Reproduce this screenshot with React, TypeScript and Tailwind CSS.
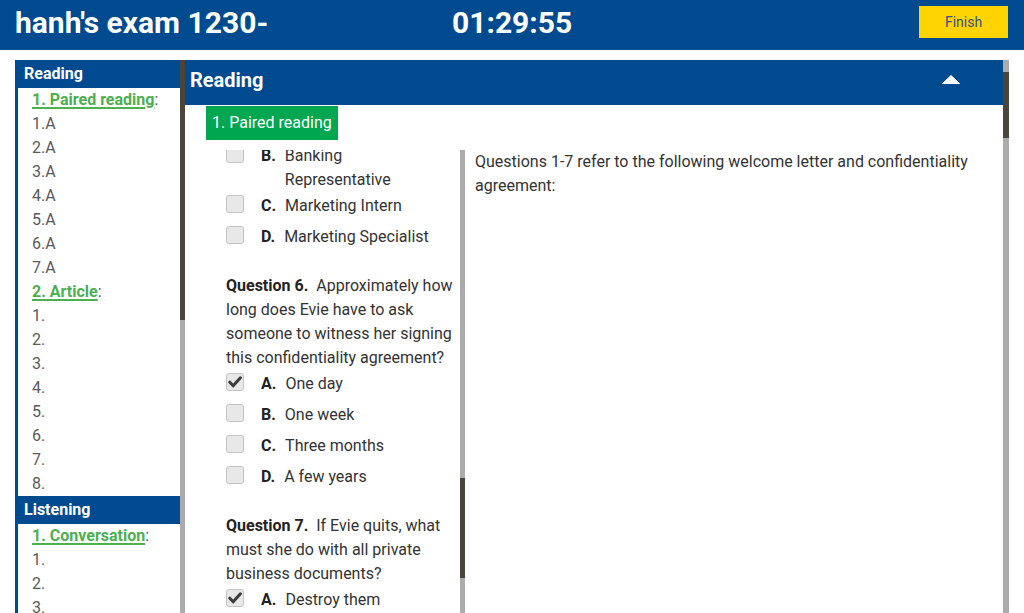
import React from "react";

const BLUE = "bg-[#004a8f]";

function Check({ checked }: { checked?: boolean }) {
  return (
    <div className="w-[18px] h-[18px] mt-[1px] shrink-0 rounded-[3px] border border-[#c4c4c4] bg-[#e8e8e8] flex items-center justify-center">
      {checked && (
        <svg width="14" height="12" viewBox="0 0 14 12">
          <path d="M1.8 6.2 L5.2 9.8 L12.4 1.8" fill="none" stroke="#3d3d3d" strokeWidth="3" strokeLinecap="round" strokeLinejoin="round" />
        </svg>
      )}
    </div>
  );
}

function Option({ letter, text, checked, mb = "mb-[7px]" }: { letter: string; text: string; checked?: boolean; mb?: string }) {
  return (
    <div className={`flex items-start pr-[12px] ${mb}`}>
      <Check checked={checked} />
      <span className="ml-[17px] font-bold text-[#222] shrink-0">{letter}</span>
      <span className="ml-[9px]">{text}</span>
    </div>
  );
}

function SideItem({ t }: { t: string }) {
  return <div className="h-[24px] leading-[24px] pl-[14px] text-[16px] text-[#5a5a5a]">{t}</div>;
}

function SideLink({ t }: { t: string }) {
  return (
    <div className="h-[24px] leading-[24px] pl-[14px] text-[16px]">
      <span className="font-bold text-[#4caf50] underline decoration-[2px] underline-offset-[2px]">{t}</span>
      <span className="text-[#555]">:</span>
    </div>
  );
}

function SideHeader({ t }: { t: string }) {
  return (
    <div className={`h-[28px] ${BLUE} text-white font-bold text-[16px] leading-[28px] -ml-[3px] pl-[9px]`}>{t}</div>
  );
}

export default function App() {
  return (
    <div
      className="w-[1024px] h-[613px] overflow-hidden bg-white text-[#333]"
      style={{ fontFamily: "Roboto, 'Noto Sans', Arial, sans-serif" }}
    >
      <header className={`h-[50px] ${BLUE} flex pl-[15px] pr-[16px]`}>
        <div className="w-[437px] text-white font-bold text-[30px] leading-[46px]">hanh's exam 1230-</div>
        <div className="text-white font-bold text-[30px] leading-[46px]">01:29:55</div>
        <button className="ml-auto mt-[6px] w-[89px] h-[32px] bg-[#ffd400] text-[#3b4f88] text-[14px]">Finish</button>
      </header>

      <div className="flex pt-[10px] h-[563px]">
        <aside className="ml-[15px] flex h-full">
          <div className="w-[165px] border-l-[3px] border-[#004a8f] overflow-hidden">
            <SideHeader t="Reading" />
            <SideLink t="1. Paired reading" />
            {["1.A", "2.A", "3.A", "4.A", "5.A", "6.A", "7.A"].map((t) => (
              <SideItem key={t} t={t} />
            ))}
            <SideLink t="2. Article" />
            {["1.", "2.", "3.", "4.", "5.", "6.", "7.", "8."].map((t) => (
              <SideItem key={"a" + t} t={t} />
            ))}
            <SideHeader t="Listening" />
            <SideLink t="1. Conversation" />
            {["1.", "2.", "3.", "4."].map((t) => (
              <SideItem key={"l" + t} t={t} />
            ))}
          </div>
          <div className="w-[5px] bg-[#ababab] flex flex-col">
            <div className="h-[260px] bg-[#4a443b]" />
          </div>
        </aside>

        <main className="flex h-full">
          <div className="w-[818px] flex flex-col h-full">
            <div className={`h-[45px] ${BLUE} flex items-center justify-between pl-[5px] pr-[43px] pb-[6px]`}>
              <span className="text-white font-bold text-[20px]">Reading</span>
              <svg width="18" height="9" viewBox="0 0 18 9">
                <path d="M9 0.5 L17.5 8.5 L0.5 8.5 Z" fill="white" stroke="white" strokeWidth="1" strokeLinejoin="round" />
              </svg>
            </div>
            <div className="pl-[21px] pt-[1px]">
              <div className="inline-block h-[34px] leading-[34px] px-[6px] bg-[#00a650] text-white text-[16px]">1. Paired reading</div>
            </div>
            <div className="flex mt-[10px] flex-1 min-h-0">
              <div className="w-[275px] overflow-hidden text-[16px] leading-[24px] pl-[41px] pr-[6px]">
                <div className="-mt-[6px]">
                  <Option letter="B." text="Banking Representative" mb="mb-[2px]" />
                  <Option letter="C." text="Marketing Intern" />
                  <Option letter="D." text="Marketing Specialist" mb="mb-[25px]" />
                  <div className="mb-[2px]">
                    <span className="font-bold text-[#222]">Question 6.</span>&nbsp; Approximately how long does Evie have to ask someone to witness her signing this confidentiality agreement?
                  </div>
                  <Option letter="A." text="One day" checked />
                  <Option letter="B." text="One week" />
                  <Option letter="C." text="Three months" />
                  <Option letter="D." text="A few years" mb="mb-[25px]" />
                  <div className="mb-[2px]">
                    <span className="font-bold text-[#222]">Question 7.</span>&nbsp; If Evie quits, what must she do with all private business documents?
                  </div>
                  <Option letter="A." text="Destroy them" checked />
                  <Option letter="B." text="Return them" />
                </div>
              </div>
              <div className="w-[5px] bg-[#ababab] flex flex-col">
                <div className="h-[328px]" />
                <div className="h-[100px] bg-[#4a443b]" />
              </div>
              <div className="flex-1 pl-[10px] pr-[20px] text-[16px] leading-[24px]">
                Questions 1-7 refer to the following welcome letter and confidentiality agreement:
              </div>
            </div>
          </div>
          <div className="w-[6px] bg-[#ababab] flex flex-col">
            <div className="h-[12px]" />
            <div className="h-[66px] bg-[#4a443b]" />
          </div>
        </main>
      </div>
    </div>
  );
}
